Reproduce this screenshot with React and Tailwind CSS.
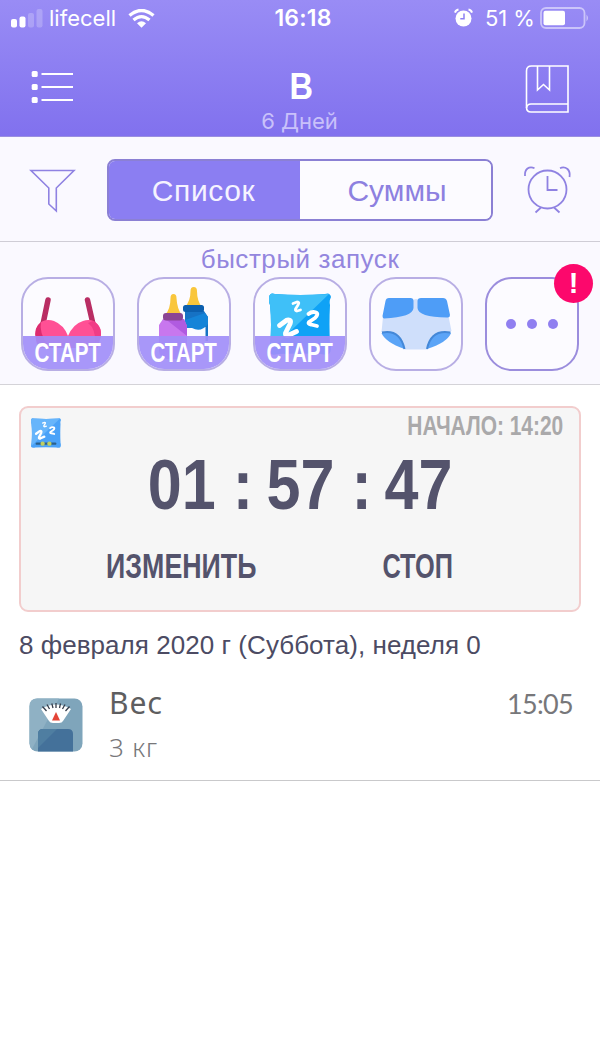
import clsx from 'clsx'

// Bold sans squeezed horizontally, used for timers and button captions
function Condensed({ className, children }) {
  return (
    <span className={clsx('inline-block whitespace-nowrap font-bold leading-none', className)}>
      {children}
    </span>
  )
}

function StatusBar() {
  return (
    <div className="grid h-9 grid-cols-3 items-center text-white">
      <div className="flex items-center pl-[11px]">
        <svg width="32" height="19" viewBox="0 0 32 19" fill="white">
          <rect x="0" y="10" width="6" height="8.5" rx="2" />
          <rect x="8.5" y="7.5" width="6" height="11" rx="2" />
          <rect x="17" y="4" width="6" height="14.5" rx="2" opacity="0.22" />
          <rect x="25.500" y="0" width="6" height="18.5" rx="2" opacity="0.22" />
        </svg>
        <span className="ml-[6px] w-[69px] whitespace-nowrap font-[Inter] text-[22px] leading-9">lifecell</span>
        <svg className="ml-[10px]" width="27" height="19" viewBox="0 0 27 19" fill="none" stroke="white">
          <path d="M1.500 6.500Q13.500 -3.500 25.500 6.500" strokeWidth="3.400" />
          <path d="M5.500 11Q13.500 4.200 21.500 11" strokeWidth="3.300" />
          <path d="M9 14.200Q13.500 10.500 18 14.200L13.500 18.800Z" fill="white" stroke="none" />
        </svg>
      </div>
      <div className="pl-[6px] text-center font-[Inter] text-[23px] font-semibold leading-9 tracking-[0.2px]">16:18</div>
      <div className="flex items-center justify-end pr-[10px]">
        <svg width="20" height="20" viewBox="0 0 20 20">
          <circle cx="10.500" cy="10.500" r="8" fill="white" />
          <path d="M2 4.600Q2.800 2 5.500 1.600M15.500 1.600Q18.200 2 19 4.600" stroke="white" strokeWidth="2" fill="none" />
          <path d="M11 5.500V10.800H7.300" stroke="#8d80f3" strokeWidth="1.500" fill="none" />
        </svg>
        <span className="ml-[12px] w-[49px] whitespace-nowrap font-[Inter] text-[22px] leading-9 tracking-[-0.1px]">51 %</span>
        <svg className="ml-[6px]" width="50" height="22" viewBox="0 0 50 22">
          <rect x="1" y="1" width="43.500" height="20" rx="5" fill="none" stroke="white" strokeWidth="1.800" opacity="0.5" />
          <rect x="3.500" y="3.700" width="21.500" height="14.600" rx="2" fill="white" />
          <path d="M46.500 7.500Q49.500 11 46.500 14.500Z" fill="white" opacity="0.5" />
        </svg>
      </div>
    </div>
  )
}

function Header() {
  return (
    <header className="h-[137px] border-b border-[#9a8fe0] bg-linear-to-b from-[#998cf5] to-[#8171ee]">
      <StatusBar />
      <div className="flex h-[100px] justify-between pl-[31px] pr-[30px] text-white">
        <svg className="mt-[34px]" width="43" height="34" viewBox="0 0 43 34" fill="white">
          {[1, 14, 27].map((y) => (
            <g key={y}>
              <rect x="0.700" y={y} width="6" height="6" rx="1.500" />
              <rect x="10.500" y={y + 2} width="31.500" height="2" />
            </g>
          ))}
        </svg>
        <div className="flex flex-col items-center">
          <div className="mt-[31px] pl-[3px] font-['Liberation_Sans'] text-[37px] font-bold leading-10">
            <span className="inline-block scale-x-[0.88]">В</span>
          </div>
          <div className="mt-[1px] whitespace-nowrap font-[Inter] text-[22px] leading-[27px] text-[#c9c1fa]">6 Дней</div>
        </div>
        <svg className="mt-[28px]" width="45" height="50" viewBox="0 0 45 50" fill="none" stroke="white" strokeWidth="1.600">
          <path d="M6.500 2H43V48H6Q1.500 48 1.500 43.500V7Q1.500 2 6.500 2Z" />
          <path d="M1.500 44Q2 40 6 40H43" />
          <path d="M12.500 2V26L18.500 20.500L24.500 26V2" />
        </svg>
      </div>
    </header>
  )
}

function Toolbar() {
  return (
    <div className="flex h-[105px] items-center justify-between border-b border-[#cfcdd6] bg-[#faf9ff] pl-[29px] pr-[27px] pt-[2px]">
      <svg className="mt-[2px]" width="47" height="46" viewBox="0 0 47 46" fill="none" stroke="#8f82e2" strokeWidth="1.600">
        <path d="M2 2.500H45L27.300 20V43L19.800 36V20Z" />
      </svg>
      <div className="ml-[1px] flex h-[62px] w-[386px] overflow-hidden rounded-[8px] border-2 border-[#8b80d4] font-['Liberation_Sans'] text-[30px]">
        <button className="flex w-[191px] items-center justify-center bg-[#8b7ef2] pr-[2px] text-[#f5f3ff]">
          <span className="tracking-[0.6px]">Список</span>
        </button>
        <button className="flex flex-1 items-center justify-center bg-[#fcfbff] pl-[3px] text-[#8d80e0]">
          <span>Суммы</span>
        </button>
      </div>
      <svg width="50" height="52" viewBox="0 0 50 52" fill="none" stroke="#8f82e2" strokeWidth="1.800">
        <circle cx="24.500" cy="25.500" r="19" />
        <path d="M24.500 12V26H34.500" />
        <path d="M2 12Q1.500 7 4.500 4.500Q7.500 2.300 11.500 4.200M37 4.200Q41 2.300 44.500 5Q47.500 8 46.500 13" />
        <path d="M18 43.500L12.500 48.500M31 43.500L36.500 48.500" />
      </svg>
    </div>
  )
}

function BraIcon() {
  return (
    <svg width="90" height="90" viewBox="0 0 90 90">
      <path d="M25 21L20 45M64.500 21L70 45" stroke="#b92d63" strokeWidth="5.500" strokeLinecap="round" />
      <path d="M13 60C10 46 20 38 31 42Q41 46 45 57Q50 45 60 42C71 38 81 47 77 60L75 69H15Z" fill="#ff5095" />
      <path d="M65 44Q73 50 72 64L77 61Q81 48 70 42Z" fill="#f03d86" />
      <path d="M13 60Q10 49 18 43Q16 53 24 65H14Z" fill="#dc2c70" />
    </svg>
  )
}

function BottlesIcon() {
  return (
    <svg width="90" height="90" viewBox="0 0 90 90">
      <path d="M46 28Q51.500 22 51.500 12Q51.500 8 54.700 8Q58 8 58 12Q58 22 63 28Z" fill="#f9c63c" />
      <path d="M46 32H65L69 38V62H66.500V48L46 44Z" fill="#1672c4" />
      <path d="M46 41L66 34L69 38V45Q62 54 53 49H46Z" fill="#1584d8" />
      <rect x="44" y="26" width="21" height="7" rx="2.500" fill="#0c5fae" />
      <path d="M26 36Q31.500 30 31.500 19Q31.500 15 34.500 15Q37.500 15 37.500 19Q38 30 43 36Z" fill="#f9c63c" />
      <path d="M24 40H45L48 47V70Q47 80 40 80H28Q20 79 20 71V46Z" fill="#c877ee" />
      <path d="M24 40H45L48 47V57L29 42Z" fill="#b05be0" />
      <rect x="24" y="34" width="20" height="7.500" rx="3" fill="#8b4594" />
    </svg>
  )
}

// Pillow with three hand-drawn z strokes
function PillowIcon({ size, feet }) {
  return (
    <svg width={size} height={size} viewBox="0 0 62 62">
      <path d="M0 4Q1 -1 6 1Q31 3 56 1Q61 -1 62 4Q60 8 61 12Q60 31 61 51Q63 58 60 61Q57 62 52 61Q31 60 9 61Q2 63 0 59Q0 55 1 51Q3 31 1 12Q-1 7 0 4Z" fill={feet ? '#4aa2f8' : '#0fa2f6'} />
      <path d="M0 4Q1 -1 6 1Q31 3 60 1L1 58Q3 31 1 12Q-1 7 0 4Z" fill={feet ? '#67b5fb' : '#3fc0f8'} />
      <g fill="none" stroke="white" strokeLinecap="round" strokeLinejoin="round">
        <path d="M24 10.500L28 9Q31 9 29 12L26.500 16Q26 18 28 18L31.500 17" strokeWidth="2.800" />
        <path d="M39.500 21Q43 18 47 19.500Q50 21 46 25L40 29Q38.500 31 42 31.500L48 33" strokeWidth="3.800" />
        <path d="M10.500 32.500L18 27Q23 26 21 31L16.500 40Q16 43.500 20 42L27.500 38.500" strokeWidth="4.800" />
      </g>
      {feet && (
        <g>
          <path d="M12 53H50" stroke="#2b608c" strokeWidth="5" strokeLinecap="round" />
          <circle cx="24" cy="53" r="4.500" fill="#bfcf62" />
          <circle cx="38" cy="53" r="4.500" fill="#bfcf62" />
        </g>
      )}
    </svg>
  )
}

function DiaperIcon() {
  return (
    <svg width="90" height="90" viewBox="0 0 90 90">
      <path d="M14 30L45 20L76 30L80.500 52Q70 54 56 70.500H33.500Q24 54 10.500 53L12 38Z" fill="#cfdffb" />
      <path d="M18 19H39.500Q42.500 19 42.500 22V29Q42 38 13 39.500Q11.500 39 11.500 37L14.500 22Q15 19 18 19Z" fill="#4e9df7" />
      <path d="M50 19H72Q75 19 76 22L79 36Q79 39 76 38.500Q47 38 46.500 29V22Q46.500 19 50 19Z" fill="#4e9df7" />
      <path d="M10.500 54Q29 49 33.500 70Q14 63 10.500 54Z" fill="#5ba4f7" />
      <path d="M80 54Q60 49 56 70Q77 63 80 54Z" fill="#5ba4f7" />
      <path d="M11 53.500Q29 50 33.500 70M79.500 53.500Q60 50 56 70" fill="none" stroke="#4488d8" strokeWidth="2" />
    </svg>
  )
}

function Tile({ start, strong, children }) {
  return (
    <div className={clsx('relative flex size-[94px] items-center justify-center overflow-hidden rounded-[27px] border-2 bg-[#fcfbff]', strong ? 'border-[#9b8ddd]' : 'border-[#b8aee4]')}>
      {children}
      {start && (
        <div className="absolute -inset-x-0.5 -bottom-0.5 flex h-[35px] items-center justify-center bg-[#a18ef8]/92">
          <Condensed className="scale-x-[0.76] font-['Liberation_Sans'] text-[27px] text-white">СТАРТ</Condensed>
        </div>
      )}
    </div>
  )
}

function QuickStart() {
  return (
    <section className="h-[143px] border-b border-[#d4d3d8] bg-[#faf9ff]">
      <div className="h-[35px] text-center font-['Liberation_Sans'] text-[26px] leading-[35px] tracking-[0.55px] text-[#9386de]">быстрый запуск</div>
      <div className="flex gap-[22px] pl-[21px]">
        <Tile start><BraIcon /></Tile>
        <Tile start><BottlesIcon /></Tile>
        <Tile start><PillowIcon size={62} /></Tile>
        <Tile><DiaperIcon /></Tile>
        <div className="relative">
          <Tile strong>
            <div className="flex gap-[11px]">
              <span className="size-[10px] rounded-full bg-[#907ff0]" />
              <span className="size-[10px] rounded-full bg-[#907ff0]" />
              <span className="size-[10px] rounded-full bg-[#907ff0]" />
            </div>
          </Tile>
          <div className="absolute -right-[14px] -top-[13px] flex size-[39px] items-center justify-center rounded-full bg-[#fc086c] font-['Liberation_Sans'] text-[29px] font-bold leading-none text-white">!</div>
        </div>
      </div>
    </section>
  )
}

function TimerCard() {
  return (
    <section className="mx-[19px] mt-[21px] h-[206px] rounded-[9px] border-2 border-[#f2cdcd] bg-[#f6f6f6] font-['Liberation_Sans'] text-[#54536c]">
      <div className="flex h-[42px] justify-between pl-[10px] pr-[16px] pt-[10px]">
        <PillowIcon size={30} feet />
        <Condensed className="-mt-[5px] origin-right scale-x-[0.775] text-[27px] leading-[27px] text-[#aaa9aa]">НАЧАЛО: 14:20</Condensed>
      </div>
      <div className="flex h-[68px] items-center justify-center">
        <Condensed className="scale-x-[0.86] text-[71px]">
          01 : <span className="-ml-[4px]">57</span> : <span className="-ml-[5px]">47</span>
        </Condensed>
      </div>
      <div className="grid grid-cols-2 pt-[30px] text-center">
        <div className="pl-[42px]">
          <Condensed className="scale-x-[0.765] text-[35px]">ИЗМЕНИТЬ</Condensed>
        </div>
        <div className="pr-[43px]">
          <Condensed className="scale-x-[0.725] text-[35px]">СТОП</Condensed>
        </div>
      </div>
    </section>
  )
}

function ScaleIcon() {
  return (
    <svg width="54" height="54" viewBox="0 0 54 54">
      <rect x="0.500" y="0.500" width="53" height="53" rx="8" fill="#7fa5bb" />
      <path d="M8 0.500H30L3 51Q0.500 49 0.500 45V8Q0.500 0.500 8 0.500Z" fill="#8fb1c4" />
      <path d="M9 53.500V36Q9 31 14 31H39Q44 31 44 36V53.500Z" fill="#44719a" />
      <path d="M9 50V36Q9 31 14 31H28Z" fill="#4f7ea1" />
      <path d="M12 11Q27 2 42 11L34 23Q33 25 30 25H24Q21 25 20 23Z" fill="white" />
      <path d="M13.500 8.500L17.500 13M18 6.500L20.500 11M22.800 5.500L24 10M27 5V10M31.500 5.500L30.500 10M36 6.500L33.500 11M40.500 8.500L36.500 13" stroke="#333b49" strokeWidth="1.300" />
      <path d="M27 14L31 22.500H23Z" fill="#e44437" />
    </svg>
  )
}

function WeightRow() {
  return (
    <div className="flex h-[117px] border-b border-[#c9c9cb] pl-[29px] pr-[27px] text-[#77777a]">
      <div className="mt-[34px]"><ScaleIcon /></div>
      <div className="ml-[26px] flex-1 font-['Noto_Sans']">
        <div className="mt-[21px] text-[30px] leading-[36px] tracking-[1.2px] text-[#5e5e60]">Вес</div>
        <div className="mt-[8px] text-[26px] font-light leading-[36px] tracking-[0.8px]">3 кг</div>
      </div>
      <div className="mt-[22px] font-[Lato] text-[27px] leading-[36px] tracking-[-0.7px]">15:05</div>
    </div>
  )
}

export default function App() {
  return (
    <main className="min-h-[1063px] w-[600px] overflow-hidden bg-white">
      <Header />
      <Toolbar />
      <QuickStart />
      <TimerCard />
      <div className="mt-[15px] whitespace-nowrap pl-[19px] font-['Liberation_Sans'] text-[26px] leading-9 tracking-[0.05px] text-[#4c4b63]">
        8 февраля 2020 г (Суббота), неделя 0
      </div>
      <div className="pt-px">
        <WeightRow />
      </div>
    </main>
  )
}
